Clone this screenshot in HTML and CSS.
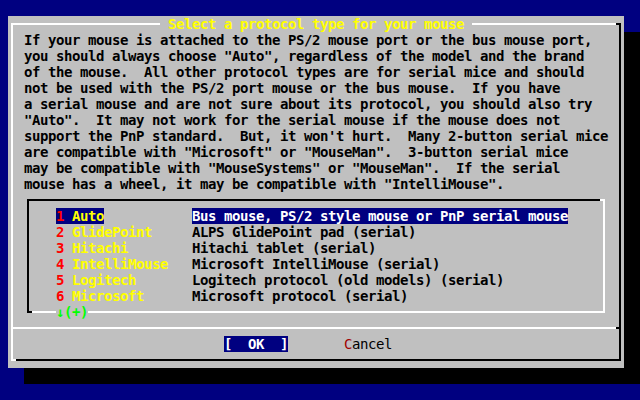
FILE: index.html
```html
<!DOCTYPE html>
<html>
<head>
<meta charset="utf-8">
<link rel="stylesheet" href="styles.css">
</head>
<body>
<div class="dialog">
  <div class="frame">
    <div class="title"><span class="title-text"> Select a protocol type for your mouse </span></div>
    <div class="msg">If your mouse is attached to the PS/2 mouse port or the bus mouse port,
you should always choose "Auto", regardless of the model and the brand
of the mouse.  All other protocol types are for serial mice and should
not be used with the PS/2 port mouse or the bus mouse.  If you have
a serial mouse and are not sure about its protocol, you should also try
"Auto".  It may not work for the serial mouse if the mouse does not
support the PnP standard.  But, it won't hurt.  Many 2-button serial mice
are compatible with "Microsoft" or "MouseMan".  3-button serial mice
may be compatible with "MouseSystems" or "MouseMan".  If the serial
mouse has a wheel, it may be compatible with "IntelliMouse".</div>
    <div class="list">
      <div class="item sel"><div class="tag"><span class="label"><span class="num">1</span> <span class="name">Auto</span></span></div><span class="desc">Bus mouse, PS/2 style mouse or PnP serial mouse</span></div>
      <div class="item"><div class="tag"><span class="label"><span class="num">2</span> <span class="name">GlidePoint</span></span></div><span class="desc">ALPS GlidePoint pad (serial)</span></div>
      <div class="item"><div class="tag"><span class="label"><span class="num">3</span> <span class="name">Hitachi</span></span></div><span class="desc">Hitachi tablet (serial)</span></div>
      <div class="item"><div class="tag"><span class="label"><span class="num">4</span> <span class="name">IntelliMouse</span></span></div><span class="desc">Microsoft IntelliMouse (serial)</span></div>
      <div class="item"><div class="tag"><span class="label"><span class="num">5</span> <span class="name">Logitech</span></span></div><span class="desc">Logitech protocol (old models) (serial)</span></div>
      <div class="item"><div class="tag"><span class="label"><span class="num">6</span> <span class="name">Microsoft</span></span></div><span class="desc">Microsoft protocol (serial)</span></div>
      <div class="more">↓(+)</div>
    </div>
    <div class="sep"></div>
    <div class="buttons">
      <span class="btn ok">[  OK  ]</span>
      <span class="btn cancel"><span class="hot">C</span>ancel</span>
    </div>
  </div>
</div>
</body>
</html>
```
FILE: styles.css
```css
* {
  box-sizing: border-box;
}

html,
body {
  margin: 0;
}

body {
  width: 640px;
  height: 400px;
  overflow: hidden;
  padding: 16px 0 0 8px;
  background: #000080;
  color: #000;
  font-family: "DejaVu Sans Mono", monospace;
  font-weight: bold;
  font-size: 14px;
  line-height: 16px;
  letter-spacing: -0.4287px;
}

.dialog {
  width: 616px;
  height: 352px;
  padding: 7px 3px;
  background: #c0c0c0;
  box-shadow: 16px 16px 0 #000;
}

.frame {
  position: relative;
  height: 338px;
  padding: 7px 0 0 11px;
  border: 2px solid;
  border-color: #fff #000 #000 #fff;
}

.frame::before {
  content: "";
  position: absolute;
  top: -2px;
  right: -2px;
  width: 5px;
  height: 2px;
  background: #000;
}

.frame::after {
  content: "";
  position: absolute;
  left: -2px;
  bottom: -2px;
  width: 5px;
  height: 2px;
  background: #fff;
}

.title {
  position: absolute;
  top: -9px;
  left: 0;
  right: 0;
  height: 16px;
  text-align: center;
}

.title-text {
  white-space: pre;
  background: #c0c0c0;
  color: #ffff00;
}

.msg {
  white-space: pre;
}

.list {
  position: relative;
  width: 578px;
  height: 114px;
  margin: 7px 0 0 3px;
  padding: 7px 0 0 27px;
  border: 2px solid;
  border-color: #000 #fff #fff #000;
}

.list::before {
  content: "";
  position: absolute;
  top: -2px;
  right: -2px;
  width: 5px;
  height: 2px;
  background: #fff;
}

.list::after {
  content: "";
  position: absolute;
  left: -2px;
  bottom: -2px;
  width: 5px;
  height: 2px;
  background: #000;
}

.item {
  display: flex;
  height: 16px;
  white-space: pre;
}

.tag {
  width: 136px;
  flex: none;
}

.num {
  color: #ff0000;
}

.name {
  color: #ffff00;
}

.sel .label,
.sel .desc {
  background: #000080;
}

.sel .desc {
  color: #fff;
}

.more {
  position: absolute;
  left: 27px;
  top: 103px;
  height: 16px;
  background: #c0c0c0;
  color: #00ff00;
}

.sep {
  position: relative;
  height: 2px;
  margin: 14px 0 0 -11px;
  background: #fff;
}

.sep::after {
  content: "";
  position: absolute;
  right: 0;
  top: 0;
  width: 3px;
  height: 2px;
  background: #000;
}

.buttons {
  display: flex;
  height: 16px;
  margin-top: 7px;
  white-space: pre;
}

.ok {
  margin-left: 200px;
  background: #000080;
  color: #fff;
}

.cancel {
  margin-left: 56px;
  font-weight: normal;
}

.hot {
  color: #a00000;
}
```
